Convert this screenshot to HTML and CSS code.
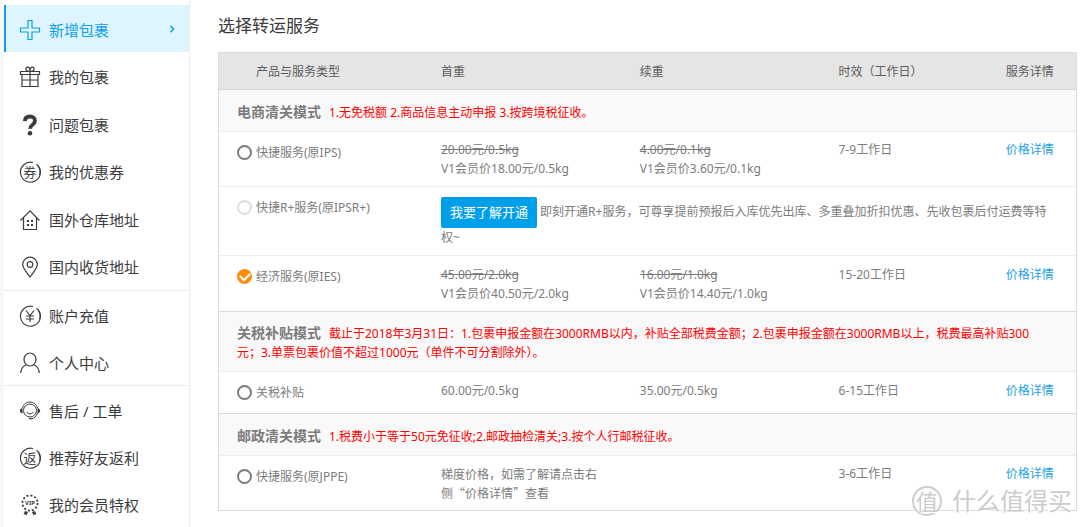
FILE: index.html
```html
<!DOCTYPE html>
<html lang="zh-CN">
<head>
<meta charset="utf-8">
<title>选择转运服务</title>
<link rel="stylesheet" href="styles.css">
</head>
<body>
<div class="page">
  <nav class="sidebar">
    <ul class="menu">
      <li><a class="item active" href="#"><svg class="icon" viewBox="0 0 22 22"><path d="M9 1.500h4V9h7.500v4H13v7.500H9V13H1.500V9H9z"/></svg><span>新增包裹</span><svg class="arrow" viewBox="0 0 6 8"><path d="M1.500 .8 4.500 4 1.500 7.200"/></svg></a></li>
      <li><a class="item" href="#"><svg class="icon" viewBox="0 0 22 22"><path d="M1.500 5.500h19v3h-19zM3 8.500v12h16v-12M11 5.500v15M3 14h16M11 5.500C6 5.500 6 1.200 8.500 1.200S11 4 11 5.500C11 4 11 1.200 13.500 1.200S16 5.500 11 5.500"/></svg><span>我的包裹</span></a></li>
      <li><a class="item" href="#"><svg class="icon thick" viewBox="0 0 22 22"><path d="M5.800 7.200C6 3.800 8 2.500 11 2.500c3 0 5 1.700 5 4.300 0 4-4.800 3.700-4.800 8"/><circle class="solid" cx="11" cy="19.200" r="2.300"/></svg><span>问题包裹</span></a></li>
      <li><a class="item" href="#"><svg class="icon" viewBox="0 0 22 22"><path d="M17.500 3.200A10 10 0 1 1 14 1.500M19 5a10 10 0 0 1 1.500 9"/><text x="11" y="16" class="glyph">券</text></svg><span>我的优惠券</span></a></li>
      <li><a class="item" href="#"><svg class="icon" viewBox="0 0 22 22"><path d="M1.500 11.500 11 1.800l9.500 9.700M4.500 9v11.500h13V9"/><path class="solid" d="M8 11h2v2H8zM12 11h2v2h-2zM8 15h2v2H8zM12 15h2v2h-2z"/></svg><span>国外仓库地址</span></a></li>
      <li><a class="item" href="#"><svg class="icon" viewBox="0 0 22 22"><path d="M11 21C8 16.500 3.700 12.500 3.700 8.500a7.300 7.300 0 0 1 14.600 0C18.300 12.500 14 16.500 11 21z"/><circle cx="11" cy="8.500" r="2.800"/></svg><span>国内收货地址</span></a></li>
    </ul>
    <ul class="menu">
      <li><a class="item" href="#"><svg class="icon" viewBox="0 0 22 22"><path d="M17.500 3.200A10 10 0 1 1 14 1.500M19 5a10 10 0 0 1 1.500 9M7 5.500l4 5 4-5M11 10.500V17M7 11h8M7 14h8"/></svg><span>账户充值</span></a></li>
      <li><a class="item" href="#"><svg class="icon" viewBox="0 0 22 22"><ellipse cx="11" cy="7.500" rx="6" ry="6.500"/><path d="M7 12.800C3.500 14.500 2 17 1.700 21M15 12.800c3.500 1.700 5 4.200 5.300 8.200"/></svg><span>个人中心</span></a></li>
    </ul>
    <ul class="menu">
      <li><a class="item" href="#"><svg class="icon fine" viewBox="0 0 22 22"><circle cx="11" cy="10.500" r="6.500"/><path d="M3.500 8C4.500 4 7.500 2 11 2s6.500 2 7.500 6M7.500 12c2 2.500 5 2.500 7 0M18.500 13c-1 3.500-3 5-6 6M9.500 18.700h3.500"/><path class="solid" d="M3.500 8v5.500C1.500 13 .8 12 .8 10.800S1.500 8.500 3.500 8zM18.500 8v5.500c2-.5 2.700-1.500 2.700-2.700S20.500 8.500 18.500 8z"/></svg><span>售后 / 工单</span></a></li>
      <li><a class="item" href="#"><svg class="icon" viewBox="0 0 22 22"><path d="M17.500 3.200A10 10 0 1 1 14 1.500M19 5a10 10 0 0 1 1.500 9"/><text x="11" y="16" class="glyph">返</text></svg><span>推荐好友返利</span></a></li>
      <li><a class="item" href="#"><svg class="icon fine" viewBox="0 0 22 22"><circle class="dots" cx="11" cy="9" r="7.600"/><text x="11" y="11" class="vip">VIP</text><path class="solid" d="M6 17l3 1-1.500 3.500-1.300-1.300-1.700.4zM16 17l-3 1 1.500 3.500 1.300-1.300 1.700.4z"/></svg><span>我的会员特权</span></a></li>
    </ul>
  </nav>

  <main class="content">
    <h1 class="title">选择转运服务</h1>
    <table class="services">
      <colgroup><col class="c-name"><col class="c-price"><col class="c-price"><col class="c-time"><col class="c-link"></colgroup>
      <thead>
        <tr><th class="name">产品与服务类型</th><th>首重</th><th>续重</th><th>时效（工作日）</th><th>服务详情</th></tr>
      </thead>
      <tbody>
        <tr class="group"><td colspan="5"><strong>电商清关模式</strong><span>1.无免税额 2.商品信息主动申报 3.按跨境税征收。</span></td></tr>
        <tr>
          <td class="name"><label><input type="radio" name="service">快捷服务(原IPS)</label></td>
          <td><del>20.00元/0.5kg</del><br>V1会员价18.00元/0.5kg</td>
          <td><del>4.00元/0.1kg</del><br>V1会员价3.60元/0.1kg</td>
          <td>7-9工作日</td><td><a href="#">价格详情</a></td>
        </tr>
        <tr>
          <td class="name"><label><input type="radio" name="service" disabled>快捷R+服务(原IPSR+)</label></td>
          <td class="promo" colspan="4"><button type="button">我要了解开通</button> 即刻开通R+服务，可尊享提前预报后入库优先出库、多重叠加折扣优惠、先收包裹后付运费等特权~</td>
        </tr>
        <tr class="last">
          <td class="name"><label><input type="radio" name="service" checked>经济服务(原IES)</label></td>
          <td><del>45.00元/2.0kg</del><br>V1会员价40.50元/2.0kg</td>
          <td><del>16.00元/1.0kg</del><br>V1会员价14.40元/1.0kg</td>
          <td>15-20工作日</td><td><a href="#">价格详情</a></td>
        </tr>
      </tbody>
      <tbody>
        <tr class="group"><td colspan="5"><strong>关税补贴模式</strong><span>截止于2018年3月31日：1.包裹申报金额在3000RMB以内，补贴全部税费金额；2.包裹申报金额在3000RMB以上，税费最高补贴300元；3.单票包裹价值不超过1000元（单件不可分割除外）。</span></td></tr>
        <tr class="last">
          <td class="name"><label><input type="radio" name="service">关税补贴</label></td>
          <td>60.00元/0.5kg</td><td>35.00元/0.5kg</td>
          <td>6-15工作日</td><td><a href="#">价格详情</a></td>
        </tr>
      </tbody>
      <tbody>
        <tr class="group"><td colspan="5"><strong>邮政清关模式</strong><span>1.税费小于等于50元免征收;2.邮政抽检清关;3.按个人行邮税征收。</span></td></tr>
        <tr class="last">
          <td class="name"><label><input type="radio" name="service">快捷服务(原JPPE)</label></td>
          <td class="cjk">梯度价格，如需了解请点击右侧“价格详情”查看</td><td></td>
          <td>3-6工作日</td><td><a href="#">价格详情</a></td>
        </tr>
      </tbody>
    </table>
    <div class="watermark"><span class="seal">值</span><span>什么值得买</span></div>
  </main>
</div>
</body>
</html>
```

FILE: styles.css
```css
* { box-sizing: border-box; }

body {
  margin: 0;
  background: #fff;
  color: #7c7c7c;
  font: 12px/19px "Noto Sans", "Noto Sans CJK SC", sans-serif;
}

a { color: #1a9fe8; text-decoration: none; }

.page { display: flex; }

/* Sidebar */
.sidebar {
  flex: none;
  width: 190px;
  padding-top: 5px;
  border-left: 4px solid #f7f7f7;
  border-right: 1px solid #ececec;
}

.menu { list-style: none; margin: 0; padding: 0; border-bottom: 1px solid #ececec; }
.menu:last-child { border-bottom: 0; }
.menu li { height: 47px; }
.menu:first-child li:nth-child(even) { height: 48px; }

.item {
  display: flex;
  align-items: center;
  gap: 8px;
  height: 100%;
  padding: 2px 12px 0 15px;
  color: #3c3c3c;
  font-size: 15px;
  line-height: 24px;
}

.item.active {
  padding-left: 13px;
  border-left: 2px solid #0c9fe9;
  background: #def4ff;
  color: #0c9fe9;
}

.icon {
  flex: none;
  width: 22px;
  height: 22px;
  fill: none;
  stroke: currentColor;
  stroke-width: 1.2;
}
.icon.thick { stroke-width: 3.8; }
.icon.fine { stroke-width: 1; }
.icon .solid { fill: currentColor; stroke: none; }
.icon .dots { stroke-width: 1.8; stroke-dasharray: 2 2; }
.icon text { fill: currentColor; stroke: none; text-anchor: middle; }
.glyph { font-size: 13px; }
.vip { font-size: 6px; font-weight: 700; }

.arrow {
  width: 6px;
  height: 8px;
  margin: 0 2px 2px auto;
  fill: none;
  stroke: currentColor;
  stroke-width: 1.5;
}

/* Main */
.content { position: relative; flex: 1; padding: 14px 3px 0 28px; }

.title {
  margin: 0 0 14px;
  color: #3c3c3c;
  font-size: 17px;
  font-weight: 400;
  line-height: 24px;
}

.services {
  width: 100%;
  table-layout: fixed;
  border: 1px solid #dcdcdc;
  border-collapse: separate;
  border-spacing: 0;
}
.c-name { width: 25.9%; }
.c-price { width: 23.2%; }
.c-time { width: 19.5%; }
.c-link { width: 8.2%; }

th {
  height: 37px;
  padding: 0;
  border-bottom: 1px solid #d6d6d6;
  background: #e5e5e5;
  color: #5c5c5c;
  font-weight: 400;
  text-align: left;
}
th.name { padding-left: 37px; }

td {
  padding: 8px 36px 8px 0;
  border-bottom: 1px solid #eee;
  vertical-align: top;
}
td:last-child { padding-right: 0; }
td.name { padding: 11px 0 8px 18px; }
td.promo { padding: 10px 20px 8px 0; }
.last td { height: 42px; padding-top: 9px; border-bottom-color: #dcdcdc; }
tbody:last-child .last td { padding-top: 8px; border-bottom: 0; }
tbody .last td.name, tbody:last-child .last td.name { padding-top: 11px; }
.cjk { font-family: "Noto Sans CJK SC", sans-serif; }

.group td {
  height: 42px;
  padding: 11px 30px 9px 18px;
  background: #f9f9f9;
  vertical-align: middle;
}
.group strong { margin-right: 8px; color: #7c7c7c; font-size: 14px; }
.group span { color: #f00; }

label { display: flex; align-items: center; gap: 4px; }

input[type="radio"] {
  display: grid;
  place-items: center;
  appearance: none;
  width: 15px;
  height: 15px;
  margin: 0;
  border: 2px solid #7c7c7c;
  border-radius: 50%;
  background: #fff;
}
input[type="radio"]:disabled { border-color: #ddd; }
input[type="radio"]:checked { border-color: #fb8c0c; background: #fb8c0c; }
input[type="radio"]:checked::after {
  content: "";
  width: 8px;
  height: 5px;
  margin-bottom: 2px;
  border: solid #fff;
  border-width: 0 0 2px 2px;
  transform: rotate(-45deg);
}

button {
  height: 31px;
  padding: 0 9px;
  border: 0;
  border-radius: 2px;
  background: #009fe9;
  color: #fff;
  font: 13px/31px "Noto Sans", "Noto Sans CJK SC", sans-serif;
  vertical-align: middle;
}

/* Watermark laid over the table corner */
.watermark {
  position: absolute;
  right: 8px;
  bottom: 10px;
  display: flex;
  align-items: center;
  gap: 10px;
  color: #ccc;
  font-size: 24px;
  line-height: 32px;
  text-shadow: 1px 1px 0 #fff, -1px -1px 0 #fff;
}
.seal {
  width: 30px;
  height: 30px;
  border: 2px solid #ccc;
  border-radius: 50%;
  background: #fff;
  font-size: 22px;
  line-height: 26px;
  text-align: center;
}
```
